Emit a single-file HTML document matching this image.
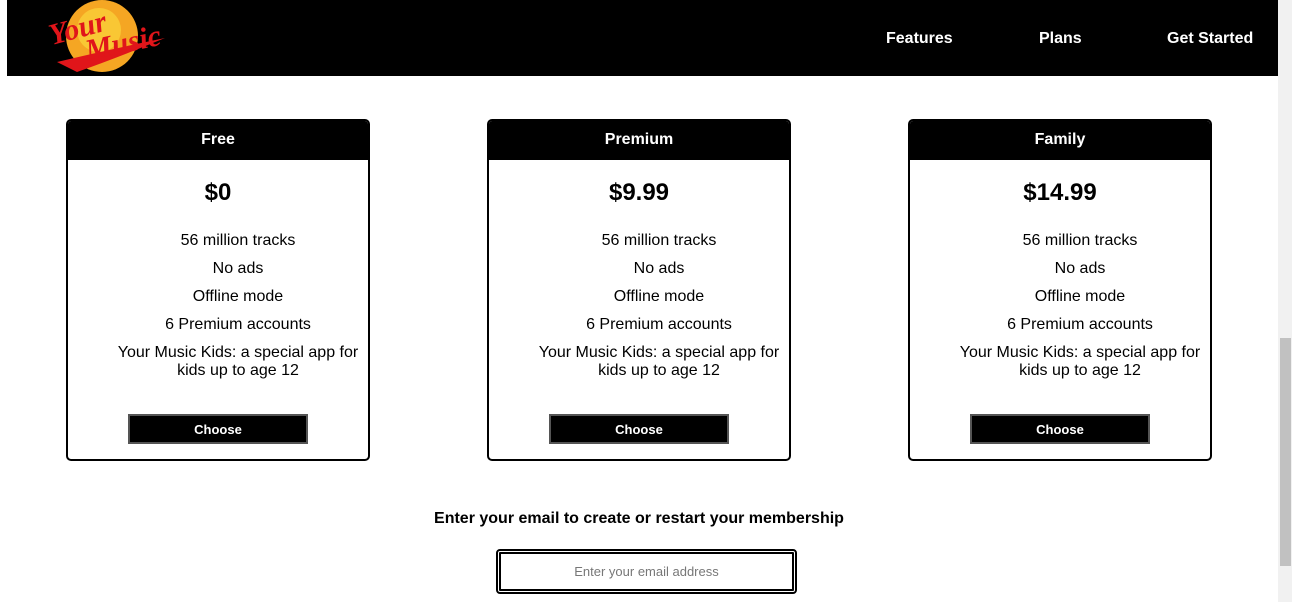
<!DOCTYPE html>
<html><head><style>
*{box-sizing:border-box}
body{margin:0;width:1292px;height:602px;overflow:hidden;background:#fff;font-family:"Liberation Sans",Arial,sans-serif;position:relative}
.hdr{position:absolute;left:7px;top:0;width:1271px;height:76px;background:#000}
.nav{position:absolute;top:30px;color:#fff;font-weight:bold;font-size:16px}
.sb{position:absolute;left:1278px;top:0;width:14px;height:602px;background:#f1f1f1}
.thumb{position:absolute;left:1280px;top:338px;width:11px;height:228px;background:#c1c1c1}
.card{position:absolute;top:119px;width:304px;height:342px;border:2px solid #000;border-radius:5px;overflow:hidden}
.ch{height:39px;background:#000;color:#fff;font-weight:bold;font-size:16px;text-align:center;line-height:38px}
.price{position:absolute;top:58px;left:0;width:100%;text-align:center;font-weight:bold;font-size:24px}
.li{position:absolute;left:40px;width:260px;text-align:center;font-size:16px;line-height:18px}
.btn{position:absolute;left:60px;top:293px;width:180px;height:30px;background:#000;border:2px solid #555;color:#fff;font-weight:bold;font-size:13px;text-align:center;line-height:27px}
</style></head><body>
<div class="hdr">
<svg style="position:absolute;left:40px;top:0" width="120" height="76" viewBox="0 0 120 76">
<circle cx="55" cy="36" r="36" fill="#f5a623"/><circle cx="52" cy="30" r="22" fill="#fbd53c" opacity=".7"/>
<path d="M10 62 Q60 50 118 38 Q70 58 30 72Z" fill="#e0151a"/>
<text x="2" y="38" font-family="Liberation Serif" font-style="italic" font-weight="bold" font-size="30" fill="#e0151a" transform="rotate(-15 30 30)">Your</text>
<text x="38" y="54" font-family="Liberation Serif" font-style="italic" font-weight="bold" font-size="30" fill="#e0151a" transform="rotate(-12 70 45)">Music</text>
</svg>
<div class="nav" style="left:879px">Features</div>
<div class="nav" style="left:1032px">Plans</div>
<div class="nav" style="left:1160px">Get Started</div>
</div>
<div class="sb"></div><div class="thumb"></div>

<div class="card" style="left:66px"><div class="ch">Free</div><div class="price">$0</div>
<div class="li" style="top:111px">56 million tracks</div><div class="li" style="top:139px">No ads</div><div class="li" style="top:167px">Offline mode</div><div class="li" style="top:195px">6 Premium accounts</div><div class="li" style="top:223px">Your Music Kids: a special app for kids up to age 12</div>
<div class="btn">Choose</div></div>

<div class="card" style="left:487px"><div class="ch">Premium</div><div class="price">$9.99</div>
<div class="li" style="top:111px">56 million tracks</div><div class="li" style="top:139px">No ads</div><div class="li" style="top:167px">Offline mode</div><div class="li" style="top:195px">6 Premium accounts</div><div class="li" style="top:223px">Your Music Kids: a special app for kids up to age 12</div>
<div class="btn">Choose</div></div>

<div class="card" style="left:908px"><div class="ch">Family</div><div class="price">$14.99</div>
<div class="li" style="top:111px">56 million tracks</div><div class="li" style="top:139px">No ads</div><div class="li" style="top:167px">Offline mode</div><div class="li" style="top:195px">6 Premium accounts</div><div class="li" style="top:223px">Your Music Kids: a special app for kids up to age 12</div>
<div class="btn">Choose</div></div>

<div style="position:absolute;left:0;top:510px;width:1278px;text-align:center;font-weight:bold;font-size:16px">Enter your email to create or restart your membership</div>
<div style="position:absolute;left:496px;top:549px;width:301px;height:45px;border:5px double #000;border-radius:4px;text-align:center;line-height:35px;font-size:13px;color:#777">Enter your email address</div>
</body></html>
